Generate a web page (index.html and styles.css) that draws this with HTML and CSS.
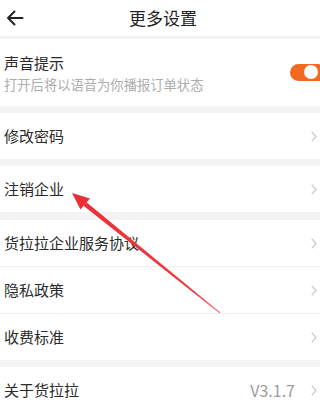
FILE: index.html
```html
<!DOCTYPE html>
<html lang="zh-CN">
<head>
<meta charset="utf-8">
<title>更多设置</title>
<link rel="stylesheet" href="styles.css">
</head>
<body>
<div class="page">
  <header class="nav">
    <span class="back">
      <svg width="18" height="16" viewBox="0 0 18 16"><path d="M16.5 8H2.2M8.5 1.5L2 8l6.5 6.5" fill="none" stroke="#222" stroke-width="2" stroke-linecap="round" stroke-linejoin="round"/></svg>
    </span>
    <h1 class="title">更多设置</h1>
    <span></span>
  </header>
  <div class="gap thin"></div>
  <section class="group">
    <div class="row tall">
      <div class="texts">
        <div class="label">声音提示</div>
        <div class="sub">打开后将以语音为你播报订单状态</div>
      </div>
      <span class="toggle"><span class="knob"></span></span>
    </div>
  </section>
  <div class="gap"></div>
  <section class="group">
    <div class="row"><span class="label">修改密码</span><svg class="chev" width="6" height="11" viewBox="0 0 6 11"><path d="M0.7 0.7L5 5.5L0.7 10.3" fill="none" stroke="#c9c9c9" stroke-width="1.2"/></svg></div>
  </section>
  <div class="gap"></div>
  <section class="group">
    <div class="row"><span class="label">注销企业</span><svg class="chev" width="6" height="11" viewBox="0 0 6 11"><path d="M0.7 0.7L5 5.5L0.7 10.3" fill="none" stroke="#c9c9c9" stroke-width="1.2"/></svg></div>
  </section>
  <div class="gap wide"></div>
  <section class="group">
    <div class="row line"><span class="label">货拉拉企业服务协议</span><svg class="chev" width="6" height="11" viewBox="0 0 6 11"><path d="M0.7 0.7L5 5.5L0.7 10.3" fill="none" stroke="#c9c9c9" stroke-width="1.2"/></svg></div>
    <div class="row line"><span class="label">隐私政策</span><svg class="chev" width="6" height="11" viewBox="0 0 6 11"><path d="M0.7 0.7L5 5.5L0.7 10.3" fill="none" stroke="#c9c9c9" stroke-width="1.2"/></svg></div>
    <div class="row"><span class="label">收费标准</span><svg class="chev" width="6" height="11" viewBox="0 0 6 11"><path d="M0.7 0.7L5 5.5L0.7 10.3" fill="none" stroke="#c9c9c9" stroke-width="1.2"/></svg></div>
  </section>
  <div class="gap"></div>
  <section class="group">
    <div class="row"><span class="label">关于货拉拉</span><span class="value">V3.1.7</span><svg class="chev" width="6" height="11" viewBox="0 0 6 11"><path d="M0.7 0.7L5 5.5L0.7 10.3" fill="none" stroke="#c9c9c9" stroke-width="1.2"/></svg></div>
  </section>
  <svg class="annotation" width="320" height="408" viewBox="0 0 320 408">
    <defs>
      <linearGradient id="fade" x1="85" y1="204" x2="220" y2="313" gradientUnits="userSpaceOnUse">
        <stop offset="0" stop-color="#ea2f36"/>
        <stop offset="0.8" stop-color="#ec3c44"/>
        <stop offset="1" stop-color="#f07a84"/>
      </linearGradient>
    </defs>
    <polygon points="86.5,202.2 83.5,205.8 219.7,313.4 220.3,312.6" fill="url(#fade)"/>
    <polygon points="72,193 90,198.5 80.5,209.5" fill="#ea2f36"/>
  </svg>
</div>
</body>
</html>
```

FILE: styles.css
```css
* { box-sizing: border-box; }
html, body { margin: 0; padding: 0; }
body {
  width: 320px;
  height: 408px;
  overflow: hidden;
  background: #ffffff;
  font-family: "Noto Sans CJK SC", "Noto Sans", sans-serif;
  color: #2b2b2b;
}
.page {
  position: relative;
  width: 320px;
  height: 408px;
  overflow: hidden;
}
.nav {
  height: 36px;
  display: grid;
  grid-template-columns: 1fr auto 1fr;
  align-items: center;
  padding-left: 6px;
}
.back { display: flex; align-items: center; }
.title {
  margin: 0;
  font-size: 17px;
  font-weight: 400;
  color: #222222;
  line-height: 24px;
}
.gap { height: 7px; background: #f3f3f3; }
.gap.thin { height: 3px; }
.gap.wide { height: 8px; }
.group { background: #ffffff; }
.row {
  height: 46px;
  display: flex;
  align-items: center;
  padding: 0 3px 0 4px;
}
.row.line { border-bottom: 1px solid #efefef; height: 47px; }
.row.tall { height: 67px; padding-top: 1px; padding-right: 0; }
.texts { flex: 1; display: flex; flex-direction: column; gap: 3px; }
.label { font-size: 15px; line-height: 20px; color: #2b2b2b; flex: 1; }
.texts .label { flex: none; }
.sub { font-size: 13.3px; line-height: 18px; color: #adadad; }
.value { font-size: 16px; color: #9c9c9c; margin-right: 16px; }
.chev { display: block; flex: none; }
.toggle {
  position: relative;
  width: 36px;
  height: 17px;
  border-radius: 9px;
  background: #f26a1f;
  margin-right: -6px;
  margin-top: -2px;
}
.knob {
  position: absolute;
  top: 1.5px;
  left: 14px;
  width: 14px;
  height: 14px;
  border-radius: 50%;
  background: #ffffff;
}
.annotation {
  position: absolute;
  left: 0;
  top: 0;
  pointer-events: none;
}
```
